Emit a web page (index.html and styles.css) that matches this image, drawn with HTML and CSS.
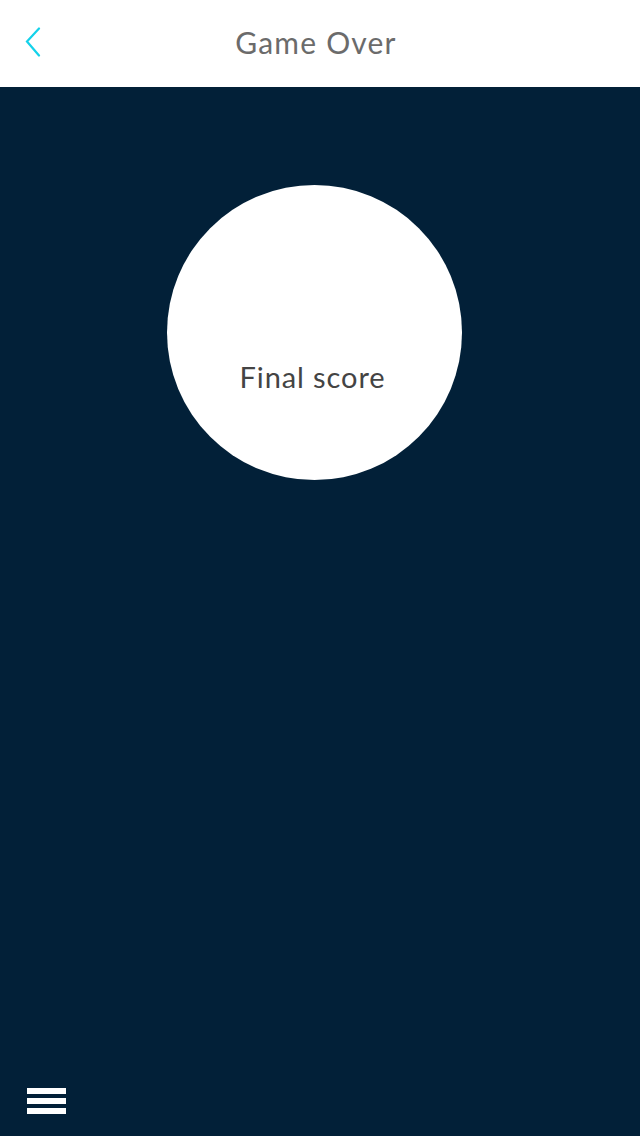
FILE: index.html
```html
<!DOCTYPE html>
<html>
<head>
<meta charset="utf-8">
<link rel="stylesheet" href="styles.css">
</head>
<body>
<div class="app">
  <header class="topbar">
    <button class="back" aria-label="Back">
      <svg width="16" height="32" viewBox="0 0 16 32"><polyline points="14,1.5 2,14.5 14,28.5" fill="none" stroke="#14d2ea" stroke-width="2.2" stroke-linecap="round" stroke-linejoin="miter"/></svg>
    </button>
    <h1 class="title">Game Over</h1>
  </header>
  <main class="stage">
    <div class="score-circle">
      <div class="score-value"></div>
      <div class="score-label">Final score</div>
    </div>
    <div class="spacer"></div>
    <button class="menu" aria-label="Menu">
      <span class="bar"></span><span class="bar"></span><span class="bar"></span>
    </button>
  </main>
</div>
</body>
</html>
```
FILE: styles.css
```css
html, body {
  margin: 0;
  padding: 0;
  height: 100%;
}
body {
  font-family: Lato, "Open Sans", sans-serif;
  background: #022038;
}
.app {
  display: flex;
  flex-direction: column;
  height: 1136px;
}
.topbar {
  height: 87px;
  background: #ffffff;
  display: flex;
  align-items: center;
  justify-content: center;
  position: relative;
}
.back {
  position: absolute;
  left: 25px;
  top: 27px;
  padding: 0;
  border: 0;
  background: none;
  line-height: 0;
}
.title {
  margin: 0 0 0 -8px;
  font-size: 30px;
  font-weight: 400;
  color: #6b6b6b;
  letter-spacing: 1.2px;
  position: relative;
  top: -2px;
}
.stage {
  flex: 1;
  display: flex;
  flex-direction: column;
  align-items: flex-start;
  background: #022038;
}
.score-circle {
  margin: 98px 0 0 167px;
  width: 295px;
  height: 295px;
  border-radius: 50%;
  background: #ffffff;
  display: flex;
  flex-direction: column;
  align-items: center;
  justify-content: center;
  box-sizing: border-box;
  padding-top: 88px;
}
.score-label {
  font-size: 29px;
  color: #444444;
  letter-spacing: 0.9px;
  margin-left: -4px;
}
.spacer {
  flex: 1;
}
.menu {
  margin: 0 0 22px 27px;
  padding: 0;
  border: 0;
  background: none;
  display: flex;
  flex-direction: column;
  gap: 4px;
}
.bar {
  display: block;
  width: 39px;
  height: 6px;
  background: #ffffff;
}
```
